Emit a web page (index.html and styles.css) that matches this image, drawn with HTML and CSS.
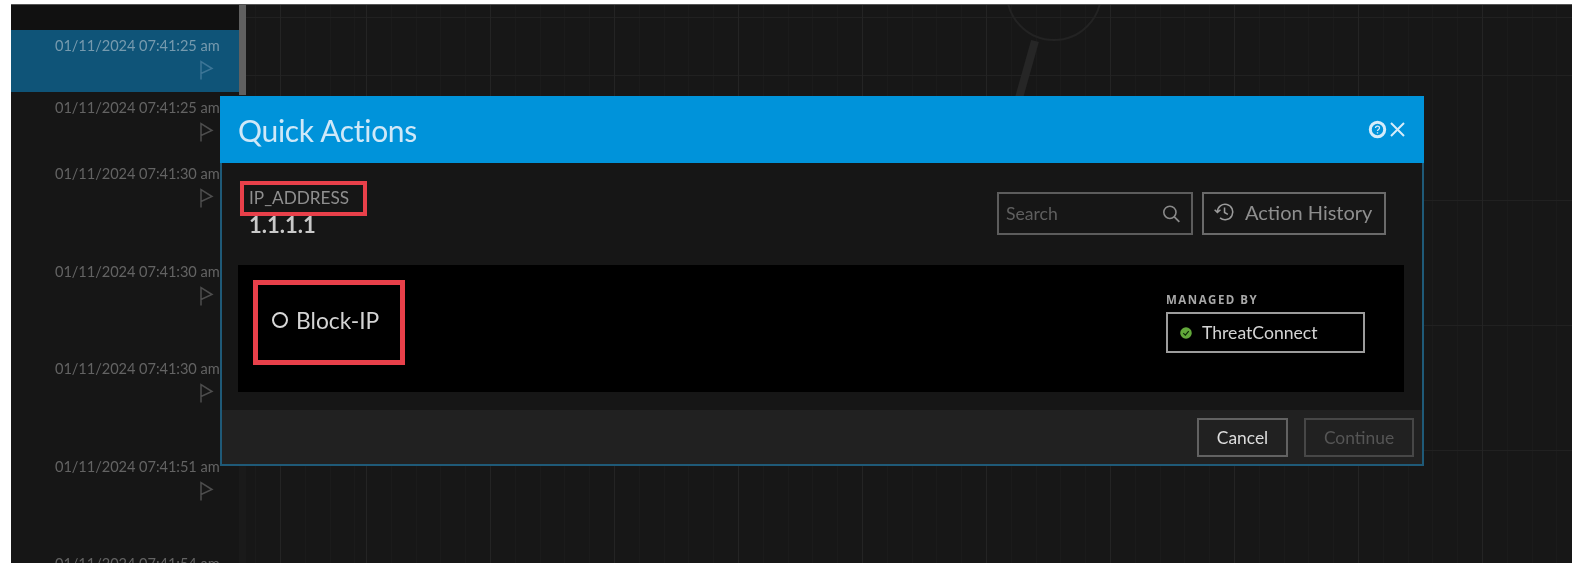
FILE: index.html
```html
<!DOCTYPE html>
<html lang="en">
<head>
<meta charset="utf-8">
<title>Quick Actions</title>
<link rel="stylesheet" href="styles.css">
</head>
<body>
<svg class="defs" width="0" height="0" aria-hidden="true">
  <symbol id="flag" viewBox="0 0 16 20"><path d="M3 19.5V1.5L14 8.5 3 13.5" fill="none" stroke="currentColor" stroke-width="1.5"/></symbol>
</svg>
<div class="screen">
  <aside class="events">
    <div class="events-head"></div>
    <div class="event event-selected"><span class="stamp">01/11/2024 07:41:25 am</span><svg class="flag"><use href="#flag"/></svg></div>
    <div class="event event-short"><span class="stamp">01/11/2024 07:41:25 am</span><svg class="flag"><use href="#flag"/></svg></div>
    <div class="event"><span class="stamp">01/11/2024 07:41:30 am</span><svg class="flag"><use href="#flag"/></svg></div>
    <div class="event"><span class="stamp">01/11/2024 07:41:30 am</span><svg class="flag"><use href="#flag"/></svg></div>
    <div class="event"><span class="stamp">01/11/2024 07:41:30 am</span><svg class="flag"><use href="#flag"/></svg></div>
    <div class="event"><span class="stamp">01/11/2024 07:41:51 am</span><svg class="flag"><use href="#flag"/></svg></div>
    <div class="event"><span class="stamp">01/11/2024 07:41:54 am</span></div>
  </aside>
  <div class="splitter"></div>
  <main class="canvas">
    <svg class="watermark" width="140" height="110" viewBox="0 0 140 110"><circle cx="75" cy="-12" r="47" fill="none" stroke="#232323" stroke-width="2"/><path d="M56 36 38 100" stroke="#262626" stroke-width="8" fill="none"/></svg>
  </main>
</div>

<section class="modal">
  <header class="modal-head">
    <h1 class="modal-title">Quick Actions</h1>
    <div class="modal-tools">
      <svg class="tool-help" width="19" height="19" viewBox="0 0 19 19"><circle cx="9.5" cy="9.5" r="7.2" fill="none" stroke="#d5ecfa" stroke-width="3"/><path d="M7.5 8c0-2.6 4.2-2.6 4 0 0 1.5-2 1.4-2 3M9.5 12.2v1.3" fill="none" stroke="#d5ecfa" stroke-width="1.3"/></svg>
      <svg class="tool-close" width="17" height="17" viewBox="0 0 17 17"><path d="M2 2l13 13M15 2L2 15" stroke="#d5ecfa" stroke-width="2"/></svg>
    </div>
  </header>
  <div class="modal-body">
    <div class="context-row">
      <div class="entity">
        <div class="entity-type"><span>IP_ADDRESS</span></div>
        <div class="entity-value">1.1.1.1</div>
      </div>
      <div class="context-tools">
        <div class="search"><span>Search</span>
          <svg width="20" height="20" viewBox="0 0 18 18"><circle cx="8" cy="7.5" r="5.5" fill="none" stroke="#8a8a8a" stroke-width="1.4"/><path d="M12 11.5l4.5 4.5" stroke="#8a8a8a" stroke-width="1.6"/></svg>
        </div>
        <button class="history" type="button">
          <svg width="22" height="20" viewBox="0 0 20 18"><path d="M4 9a7 7 0 1 1 2.4 5.3M1.5 7 4 9.5 6.8 7M10.5 5v4.5l3 1.6" fill="none" stroke="#9a9a9a" stroke-width="1.4"/></svg>
          Action History
        </button>
      </div>
    </div>
    <div class="action-panel">
      <div class="action-pick"><span class="radio"></span><span class="action-name">Block-IP</span></div>
      <div class="managed">
        <div class="managed-label">MANAGED BY</div>
        <div class="managed-box"><svg width="12" height="12" viewBox="0 0 11 11"><circle cx="5.5" cy="5.5" r="5.3" fill="#62a83a"/><path d="M3 5.6 4.9 7.4 8 3.8" fill="none" stroke="#0d2a07" stroke-width="1.1"/></svg>ThreatConnect</div>
      </div>
    </div>
  </div>
  <footer class="modal-foot">
    <button class="btn btn-cancel" type="button">Cancel</button>
    <button class="btn btn-continue" type="button">Continue</button>
  </footer>
</section>
</body>
</html>
```

FILE: styles.css
```css
* { box-sizing: border-box; }
html, body { margin: 0; height: 100%; }
body {
  width: 1572px;
  height: 570px;
  overflow: hidden;
  background: #fff;
  font-family: Lato, "Open Sans", sans-serif;
  position: relative;
}
.defs { position: absolute; }
button { font-family: inherit; background: none; }

.screen {
  display: flex;
  height: 559px;
  margin: 4px 0 0 11px;
  background: #171717;
  border-top: 1px solid #555;
  overflow: hidden;
  filter: blur(.6px);
}
.events { width: 228px; flex: none; background: #161616; }
.events-head { height: 25px; background: #111; }
.event {
  height: 97.5px;
  padding-top: 8px;
  display: flex;
  flex-direction: column;
  color: #636363;
}
.event-selected { height: 62px; background: #0f5478; color: #769aae; }
.event-short { height: 66px; }
.stamp { display: block; margin-left: 44px; font-size: 14.6px; line-height: 16px; letter-spacing: -.05px; white-space: nowrap; }
.flag { width: 16px; height: 20px; margin: 6px 0 0 187px; color: #4d4d4d; flex: none; }
.event-selected .flag { color: #3c7596; }
.splitter { width: 7px; flex: none; background: linear-gradient(#606060 0 90px, #1a1a1a 90px); }
.canvas {
  flex: 1;
  position: relative;
  background-color: #171717;
  background-image:
    repeating-linear-gradient(90deg, #242424 0 1px, transparent 1px 124px),
    repeating-linear-gradient(180deg, #212121 0 1px, transparent 1px 125px),
    repeating-linear-gradient(90deg, #1b1b1b 0 1px, transparent 1px 24.8px);
  background-position: 120px 0, 0 70px, 120px 0;
}
.watermark { position: absolute; left: 733px; top: 0; }

.modal {
  position: absolute;
  left: 220px;
  top: 96px;
  width: 1204px;
  height: 370px;
  display: flex;
  flex-direction: column;
  background: #161616;
  border: solid #1f5a78;
  border-width: 0 2px 2px;
  filter: blur(.6px);
}
.modal-head {
  height: 67px;
  margin: 0 -2px;
  padding: 0 18px 0 18px;
  flex: none;
  display: flex;
  align-items: center;
  justify-content: space-between;
  background: #0093da;
}
.modal-title { margin: 0; font-size: 30px; font-weight: 400; color: #cfe8f8; letter-spacing: -.3px; }
.modal-tools { display: flex; align-items: center; gap: 2px; }
.modal-body { flex: 1; padding: 18px 18px 0 16px; }
.context-row { display: flex; justify-content: space-between; padding-right: 18px; height: 84px; }
.entity { margin-left: 2px; }
.entity-type {
  width: 127px;
  height: 35px;
  border: 4px solid #e8404a;
  padding-left: 5px;
  font-size: 17.2px;
  line-height: 26px;
  color: #8f8f8f;
}
.entity-value { margin: -1px 0 0 9px; font-size: 22px; line-height: 20px; color: #c9c9c9; font-weight: 700; }
.context-tools { display: flex; gap: 9px; margin-top: 11px; align-items: flex-start; }
.search {
  width: 196px;
  height: 43px;
  display: flex;
  align-items: center;
  justify-content: space-between;
  padding: 0 10px 0 7px;
  border: 2px solid #5c5c5c;
  font-size: 17.6px;
  color: #5f5f5f;
}
.history {
  width: 184px;
  height: 43px;
  display: flex;
  align-items: center;
  gap: 10px;
  padding: 0 0 3px 9px;
  border: 2px solid #6a6a6a;
  font-size: 20px;
  color: #8e8e8e;
}
.action-panel {
  height: 127px;
  display: flex;
  justify-content: space-between;
  background: #000;
  padding: 15px 39px 0 15px;
}
.action-pick {
  width: 152px;
  height: 85px;
  display: flex;
  align-items: center;
  gap: 8px;
  padding: 0 0 6px 14px;
  border: 5px solid #e8404a;
}
.radio { width: 16px; height: 16px; border: 2.5px solid #d8d8d8; border-radius: 50%; flex: none; }
.action-name { font-size: 22.8px; color: #d4d4d4; white-space: nowrap; }
.managed { width: 199px; padding-top: 13px; }
.managed-label { font-size: 11.5px; font-weight: 700; letter-spacing: 1.5px; line-height: 13px; color: #a8a8a8; font-family: "Open Sans", sans-serif; }
.managed-box {
  height: 41px;
  margin-top: 6px;
  display: flex;
  align-items: center;
  gap: 10px;
  padding-left: 12px;
  border: 2px solid #9c9c9c;
  font-size: 17.6px;
  color: #d4d4d4;
}
.modal-foot {
  height: 54px;
  flex: none;
  display: flex;
  justify-content: flex-end;
  gap: 16px;
  padding: 8px 8px 0 0;
  background: #212121;
}
.btn { height: 39px; border: 2px solid #626262; font-size: 17.4px; padding: 0; }
.btn-cancel { width: 91px; color: #ddd; }
.btn-continue { width: 110px; color: #555; border-color: #474747; }
```
